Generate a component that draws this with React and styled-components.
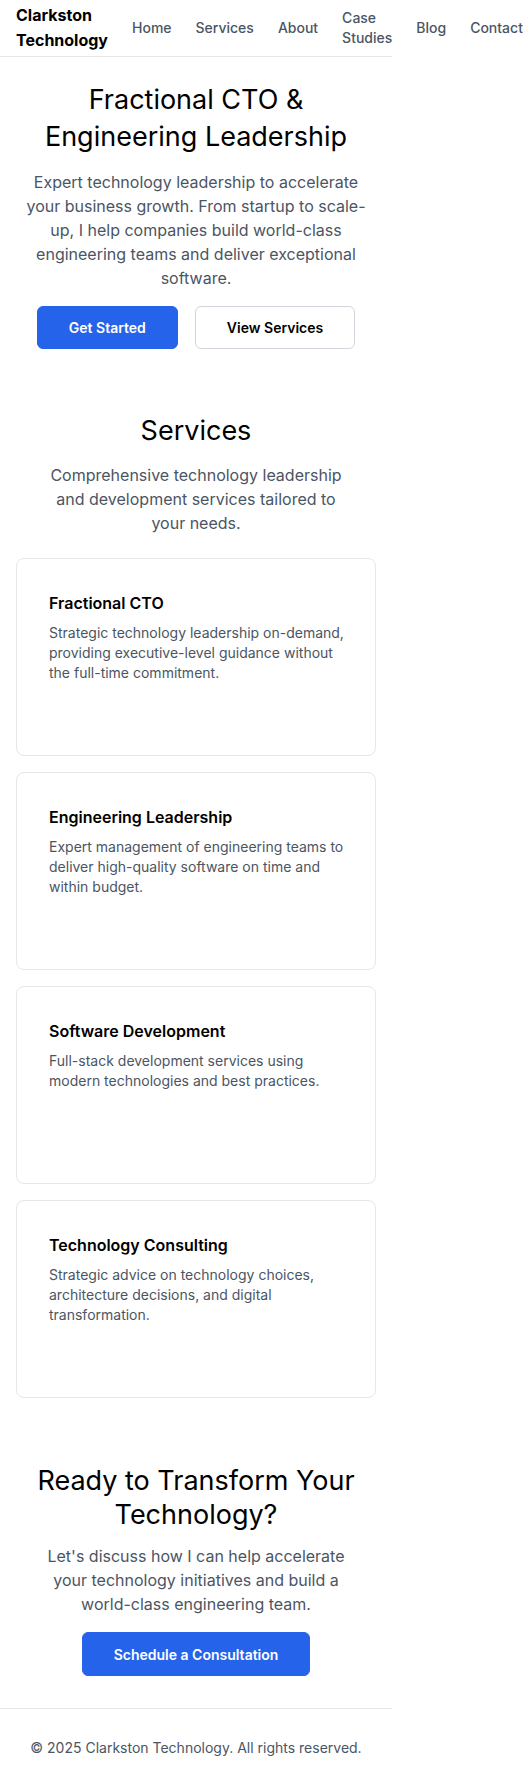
import styled, { createGlobalStyle } from 'styled-components';

const GlobalStyle = createGlobalStyle`
    * { box-sizing: border-box; }
    body {
        margin: 0;
        background: #ffffff;
        font-family: Inter, "Noto Sans", sans-serif;
        color: #000000;
    }
`;

const Page = styled.div`
    width: 392px;
`;

const Header = styled.header`
    display: flex;
    align-items: center;
    gap: 24px;
    height: 57px;
    padding: 0 16px;
    border-bottom: 1px solid #e5e7eb;
`;

const Logo = styled.div`
    width: min-content;
    flex-shrink: 0;
    font-size: 16px;
    font-weight: 700;
    line-height: 25px;
    color: #000000;
`;

const Nav = styled.nav`
    display: flex;
    align-items: center;
    gap: 24px;
    flex-shrink: 0;
`;

const NavLink = styled.a`
    width: min-content;
    flex-shrink: 0;
    font-size: 14px;
    font-weight: 500;
    line-height: 20px;
    color: #4b5563;
    text-decoration: none;
`;

const Section = styled.section`
    display: flex;
    flex-direction: column;
    align-items: center;
    text-align: center;
    padding: ${props => props.pad || '32px 16px'};
    border-bottom: ${props => props.divider ? '1px solid #e5e7eb' : 'none'};
`;

const Title = styled.h1`
    margin: 0;
    font-size: 27px;
    font-weight: 400;
    line-height: ${props => props.lh || '35px'};
    color: #000000;
`;

const Lead = styled.p`
    margin: ${props => props.margin || '15px 0 0'};
    max-width: ${props => props.maxWidth || '360px'};
    font-size: 16px;
    line-height: 24px;
    color: #4b5563;
`;

const Actions = styled.div`
    display: flex;
    gap: 17px;
    margin-top: 16px;
`;

const Button = styled.a`
    display: inline-flex;
    align-items: center;
    justify-content: center;
    height: ${props => props.tall ? '44px' : '43px'};
    padding: 0 31px;
    border-radius: 6px;
    font-size: 14px;
    font-weight: 600;
    text-decoration: none;
    background: ${props => props.outline ? '#ffffff' : '#2563eb'};
    color: ${props => props.outline ? '#000000' : '#ffffff'};
    border: 1px solid ${props => props.outline ? '#d1d5db' : '#2563eb'};
`;

const CardList = styled.div`
    display: flex;
    flex-direction: column;
    gap: 16px;
    width: 100%;
    margin-top: 23px;
`;

const Card = styled.div`
    height: 198px;
    padding: 32px 20px 32px 32px;
    border: 1px solid #e5e7eb;
    border-radius: 8px;
    text-align: left;
`;

const CardTitle = styled.h3`
    margin: 0;
    font-size: 16px;
    font-weight: 600;
    line-height: 24px;
    color: #000000;
`;

const CardText = styled.p`
    margin: 8px 0 0;
    font-size: 14px;
    line-height: 20px;
    color: #4b5563;
`;

const Footer = styled.footer`
    padding: 29px 16px 28px;
    text-align: center;
    font-size: 14px;
    line-height: 20px;
    color: #4b5563;
`;

const services = [
    {
        title: 'Fractional CTO',
        text: 'Strategic technology leadership on-demand, providing executive-level guidance without the full-time commitment.'
    },
    {
        title: 'Engineering Leadership',
        text: 'Expert management of engineering teams to deliver high-quality software on time and within budget.'
    },
    {
        title: 'Software Development',
        text: 'Full-stack development services using modern technologies and best practices.'
    },
    {
        title: 'Technology Consulting',
        text: 'Strategic advice on technology choices, architecture decisions, and digital transformation.'
    }
];

const App = () => {
    return (
        <Page>
            <GlobalStyle />
            <Header>
                <Logo>Clarkston Technology</Logo>
                <Nav>
                    <NavLink href="#">Home</NavLink>
                    <NavLink href="#">Services</NavLink>
                    <NavLink href="#">About</NavLink>
                    <NavLink href="#">Case Studies</NavLink>
                    <NavLink href="#">Blog</NavLink>
                    <NavLink href="#">Contact</NavLink>
                </Nav>
            </Header>

            <Section pad="24px 16px 32px">
                <Title lh="37px">Fractional CTO &amp; Engineering Leadership</Title>
                <Lead>
                    Expert technology leadership to accelerate your business growth. From startup to scale-up, I help companies build world-class engineering teams and deliver exceptional software.
                </Lead>
                <Actions>
                    <Button href="#">Get Started</Button>
                    <Button href="#" outline>View Services</Button>
                </Actions>
            </Section>

            <Section pad="32px 16px 34px">
                <Title>Services</Title>
                <Lead maxWidth="310px">
                    Comprehensive technology leadership and development services tailored to your needs.
                </Lead>
                <CardList>
                    {services.map(s => (
                        <Card key={s.title}>
                            <CardTitle>{s.title}</CardTitle>
                            <CardText>{s.text}</CardText>
                        </Card>
                    ))}
                </CardList>
            </Section>

            <Section pad="32px 16px 32px" divider>
                <Title lh="34px">Ready to Transform Your Technology?</Title>
                <Lead maxWidth="310px" margin="12px 0 0">
                    Let's discuss how I can help accelerate your technology initiatives and build a world-class engineering team.
                </Lead>
                <Actions>
                    <Button href="#" tall>Schedule a Consultation</Button>
                </Actions>
            </Section>

            <Footer>© 2025 Clarkston Technology. All rights reserved.</Footer>
        </Page>
    );
};

export default App;
